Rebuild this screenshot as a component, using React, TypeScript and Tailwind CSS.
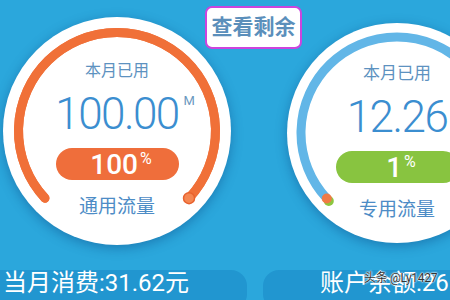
import React from "react";

const cjk = { fontFamily: 'Roboto, "Noto Sans CJK SC", sans-serif' };

type GaugeProps = {
  size: number;
  r: number;
  track: string;
  progress: number; // 0..1
  color: string;
  knob: "orange" | "mixed";
};

// arc from 137deg (lower left) clockwise over the top to 43deg (lower right)
const Gauge = ({ size, r, track, progress, color, knob }: GaugeProps) => {
  const c = size / 2;
  const a0 = (137 * Math.PI) / 180;
  const sweep = (266 * Math.PI) / 180;
  const pt = (a: number) => [c + r * Math.cos(a), c + r * Math.sin(a)];
  const [sx, sy] = pt(a0);
  const [ex, ey] = pt(a0 + sweep);
  const pa = a0 + sweep * progress;
  const [px, py] = pt(pa);
  const big = sweep * progress > Math.PI ? 1 : 0;

  return (
    <svg width={size} height={size} className="absolute inset-0">
      <path
        d={`M${sx} ${sy} A${r} ${r} 0 1 1 ${ex} ${ey}`}
        fill="none"
        stroke={track}
        strokeWidth={9}
        strokeLinecap="round"
      />
      {progress > 0.02 && (
        <path
          d={`M${sx} ${sy} A${r} ${r} 0 ${big} 1 ${px} ${py}`}
          fill="none"
          stroke={color}
          strokeWidth={9}
          strokeLinecap="round"
        />
      )}
      {knob === "orange" ? (
        <circle cx={px} cy={py} r={5.5} fill="#f58752" stroke="#e8622e" strokeWidth={1.5} />
      ) : (
        <>
          <circle cx={px + 2} cy={py + 2.5} r={5} fill="#8cc63f" />
          <circle cx={px} cy={py} r={5} fill="#f07a45" />
        </>
      )}
    </svg>
  );
};

type DialProps = {
  size: number;
  r: number;
  track: string;
  progress: number;
  color: string;
  knob: "orange" | "mixed";
  value: string;
  pill: string;
  pillColor: string;
  name: string;
  labelSize: string;
  pad: string;
};

const Dial = (p: DialProps) => (
  <div
    className="relative shrink-0 rounded-full bg-white shadow-[0_3px_12px_rgba(10,70,130,0.45)]"
    style={{ width: p.size, height: p.size }}
  >
    <Gauge size={p.size} r={p.r} track={p.track} progress={p.progress} color={p.color} knob={p.knob} />
    <div className={`relative flex flex-col items-center ${p.pad}`} style={cjk}>
      <div className={`leading-none text-[#5d92c0] ${p.labelSize}`}>本月已用</div>
      <div className="relative mt-[13px] text-[44px] font-light leading-none tracking-[-1.5px] text-[#3b8ed0]">
        {p.value}
        <span className="absolute -right-[16px] top-[2px] text-[13px] font-normal tracking-normal text-[#6a98c0]">
          M
        </span>
      </div>
      <div
        className="mt-[12px] flex h-[32px] w-[123px] items-start justify-center rounded-full pl-[8px] pt-[3px] text-white"
        style={{ backgroundColor: p.pillColor }}
      >
        <span className="text-[28px] font-medium leading-none">{p.pill}</span>
        <span className="ml-[2px] text-[16px] leading-none">%</span>
      </div>
      <div className="mt-[17px] text-[19px] leading-none text-[#4d8cc6]">{p.name}</div>
    </div>
  </div>
);

export default function App() {
  return (
    <div className="relative flex h-[300px] w-[450px] flex-col overflow-hidden bg-[#2ba7dc]" style={cjk}>
      <div className="flex items-start">
        <div className="ml-[3px] mt-[17px]">
          <Dial
            size={228}
            r={98.5}
            track="#f07038"
            progress={1}
            color="#f07038"
            knob="orange"
            value="100.00"
            pill="100"
            pillColor="#ef6e3b"
            name="通用流量"
            labelSize="text-[16px]"
            pad="pt-[46px]"
          />
        </div>
        <div className="relative z-10 -ml-[26px] mt-[6px] flex h-[43px] w-[97px] shrink-0 items-center justify-center rounded-[7px] border-2 border-[#cc44dd] bg-white">
          <span className="text-[21px] font-bold leading-none text-[#5b8fbb]">查看剩余</span>
        </div>
        <div className="-ml-[15px] mt-[23px]">
          <Dial
            size={220}
            r={96}
            track="#62b6e7"
            progress={0}
            color="#8cc63f"
            knob="mixed"
            value="12.26"
            pill="1"
            pillColor="#88c440"
            name="专用流量"
            labelSize="text-[17px]"
            pad="pt-[42px]"
          />
        </div>
      </div>

      <div className="mt-[25px] flex">
        <div className="h-[40px] w-[247px] shrink-0 rounded-r-[16px] bg-[#2196d0] pl-[3px] pt-[1px]">
          <span className="whitespace-nowrap text-[24px] leading-none text-white">当月消费:31.62元</span>
        </div>
        <div className="ml-[16px] h-[40px] flex-1 rounded-l-[16px] bg-[#2196d0] pl-[57px] pt-[1px]">
          <span className="whitespace-nowrap text-[24px] leading-none text-white">账户余额:26</span>
        </div>
      </div>

      <div className="absolute left-[364px] top-[272px] whitespace-nowrap text-[12px] leading-none tracking-[-0.3px] text-[#333] [text-shadow:0_0_2px_#fff,0_0_2px_#fff,0_0_1px_#fff]">
        头条 @Ly1427
      </div>
    </div>
  );
}
